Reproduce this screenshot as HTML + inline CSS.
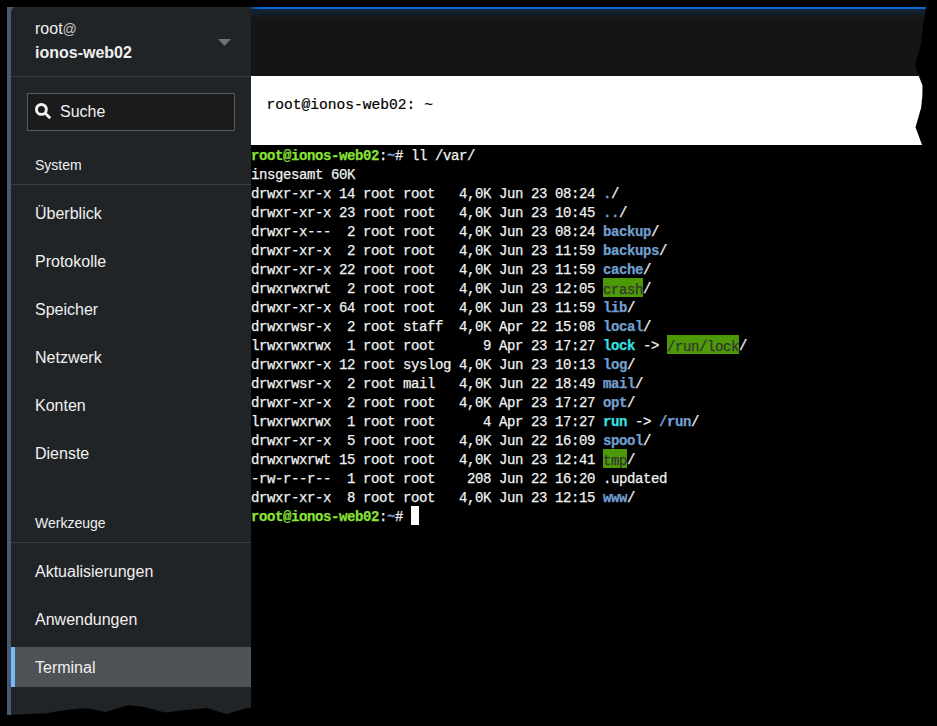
<!DOCTYPE html>
<html><head><meta charset="utf-8">
<style>
html,body{margin:0;padding:0;}
body{width:937px;height:726px;background:#000;position:relative;overflow:hidden;font-family:"Liberation Sans",sans-serif;}
.abs{position:absolute;}
#strip{left:7px;top:7px;width:4px;height:708px;background:#485a72;}
#strip2{left:7px;top:7px;width:10px;height:10px;background:#485a72;}
#side{left:11px;top:7px;width:240px;height:711px;background:#212427;border-top-left-radius:5px;
 clip-path:polygon(0 0,240px 0,240px 700.8px,236.1px 701px,215.3px 706.9px,195.9px 701px,175px 703.1px,154.2px 705.5px,133.4px 699.9px,119px 698.3px,113.9px 699px,94.4px 704.9px,80.6px 702.1px,72.2px 701.3px,55.6px 703.1px,34.8px 706.3px,0px 707.7px);}
#side .hl{position:absolute;left:24px;color:#f0f0f0;font-size:16px;line-height:24px;white-space:nowrap;}
#side .sep{position:absolute;left:0;width:240px;height:1px;background:#3c3f42;}
#search{left:16px;top:86px;width:206px;height:36px;border:1px solid #57595c;background:#1b1b1b;}
#side .item{position:absolute;left:24px;font-size:16px;line-height:24px;color:#f0f0f0;white-space:nowrap;}
#side .sec{position:absolute;left:24px;font-size:14px;line-height:20px;color:#f0f0f0;white-space:nowrap;}
#active{left:0;top:640px;width:240px;height:40px;background:#4f5255;}
#activebar{left:0;top:640px;width:4px;height:40px;background:#73bcf7;}
#topbar{left:251px;top:7px;width:676px;height:69px;background:#151515;
 clip-path:polygon(0 0,675px 0,672px 20px,669.5px 39px,664px 59px,668px 69px,0 69px);}
#topline{left:0;top:0;width:100%;height:2px;background:linear-gradient(90deg,#1f3f66 0,#066ad9 10px,#066ad9 100%);}
#topglow{left:0;top:2px;width:100%;height:10px;background:linear-gradient(180deg,#10263d,#151515);}
#title{left:251px;top:76px;width:675px;height:69px;background:#fff;
 clip-path:polygon(0 0,667.8px 0,671.5px 9.4px,671.3px 20.4px,670.2px 31.4px,664.5px 51.2px,671.1px 69px,0 69px);}
#title span{-webkit-text-stroke:0.2px #000;position:absolute;left:15.5px;top:17px;font-family:"Liberation Mono",monospace;font-size:14.6px;line-height:24px;color:#000;white-space:pre;}
#sideline{left:251px;top:7px;width:1px;height:708px;background:#161718;}
#term{left:251px;top:145px;width:675px;height:581px;background:#000;}
#term pre{margin:0;padding-top:2px;-webkit-text-stroke:0.25px currentColor;font-family:"Liberation Mono",monospace;font-size:14px;letter-spacing:-0.4px;line-height:19px;color:#f2f2f2;white-space:pre;}
.g{color:#8ae234;font-weight:bold;}
.b{color:#729fcf;font-weight:bold;}
.bn{color:#729fcf;}
.c{color:#34e2e2;font-weight:bold;}
.gb{background:#4e9a06;color:#333;padding:3.5px 0 0 0;}
.cur{position:absolute;left:160px;top:361px;width:8px;height:19px;background:#fff;}
</style></head>
<body>
<div id="strip" class="abs"></div><div id="strip2" class="abs"></div>
<div id="side" class="abs">
  <div class="hl" style="top:10px;">root<span style="color:#c6c6c6;font-size:14px;">@</span></div>
  <div class="hl" style="top:34px;font-weight:bold;">ionos-web02</div>
  <svg class="abs" style="left:207px;top:32px" width="13" height="8" viewBox="0 0 13 8"><path d="M0 0H13L6.5 7Z" fill="#6e7175"/></svg>
  <div class="sep" style="top:69px;"></div>
  <div id="search" class="abs">
    <svg class="abs" style="left:7px;top:9px" width="17" height="17" viewBox="0 0 17 17"><circle cx="6.4" cy="6.4" r="4.95" fill="none" stroke="#f2f2f2" stroke-width="2.9"/><path d="M9.8 9.8L15.2 15.2" stroke="#f2f2f2" stroke-width="2.9" stroke-linecap="butt"/></svg>
    <span class="abs" style="left:32px;top:6px;font-size:16px;line-height:24px;color:#f0f0f0;">Suche</span>
  </div>
  <div class="sec" style="top:148px;">System</div>
  <div class="sep" style="top:177px;"></div>
  <div class="item" style="top:194.5px;">Überblick</div>
  <div class="item" style="top:242.5px;">Protokolle</div>
  <div class="item" style="top:290.5px;">Speicher</div>
  <div class="item" style="top:338.5px;">Netzwerk</div>
  <div class="item" style="top:386.5px;">Konten</div>
  <div class="item" style="top:434.5px;">Dienste</div>
  <div class="sec" style="top:506px;">Werkzeuge</div>
  <div class="sep" style="top:535px;"></div>
  <div class="item" style="top:552.5px;">Aktualisierungen</div>
  <div class="item" style="top:600.5px;">Anwendungen</div>
  <div id="active" class="abs"></div>
  <div id="activebar" class="abs"></div>
  <div class="item" style="top:648.5px;">Terminal</div>
</div>
<div id="topbar" class="abs"><div id="topline" class="abs"></div><div id="topglow" class="abs"></div></div>
<div id="title" class="abs"><span>root@ionos-web02: ~</span></div>
<div id="term" class="abs"><pre><span class="g">root@ionos-web02</span>:<span class="b">~</span># ll /var/
insgesamt 60K
drwxr-xr-x 14 root root   4,0K Jun 23 08:24 <span class="b">.</span>/
drwxr-xr-x 23 root root   4,0K Jun 23 10:45 <span class="b">..</span>/
drwxr-x---  2 root root   4,0K Jun 23 08:24 <span class="b">backup</span>/
drwxr-xr-x  2 root root   4,0K Jun 23 11:59 <span class="b">backups</span>/
drwxr-xr-x 22 root root   4,0K Jun 23 11:59 <span class="b">cache</span>/
drwxrwxrwt  2 root root   4,0K Jun 23 12:05 <span class="gb">crash</span>/
drwxr-xr-x 64 root root   4,0K Jun 23 11:59 <span class="b">lib</span>/
drwxrwsr-x  2 root staff  4,0K Apr 22 15:08 <span class="b">local</span>/
lrwxrwxrwx  1 root root      9 Apr 23 17:27 <span class="c">lock</span> -&gt; <span class="gb">/run/lock</span>/
drwxrwxr-x 12 root syslog 4,0K Jun 23 10:13 <span class="b">log</span>/
drwxrwsr-x  2 root mail   4,0K Jun 22 18:49 <span class="b">mail</span>/
drwxr-xr-x  2 root root   4,0K Apr 23 17:27 <span class="b">opt</span>/
lrwxrwxrwx  1 root root      4 Apr 23 17:27 <span class="c">run</span> -&gt; <span class="b">/run</span>/
drwxr-xr-x  5 root root   4,0K Jun 22 16:09 <span class="b">spool</span>/
drwxrwxrwt 15 root root   4,0K Jun 23 12:41 <span class="gb">tmp</span>/
-rw-r--r--  1 root root    208 Jun 22 16:20 .updated
drwxr-xr-x  8 root root   4,0K Jun 23 12:15 <span class="b">www</span>/
<span class="g">root@ionos-web02</span>:<span class="b">~</span># <span class="cur"></span></pre></div>
</body></html>
